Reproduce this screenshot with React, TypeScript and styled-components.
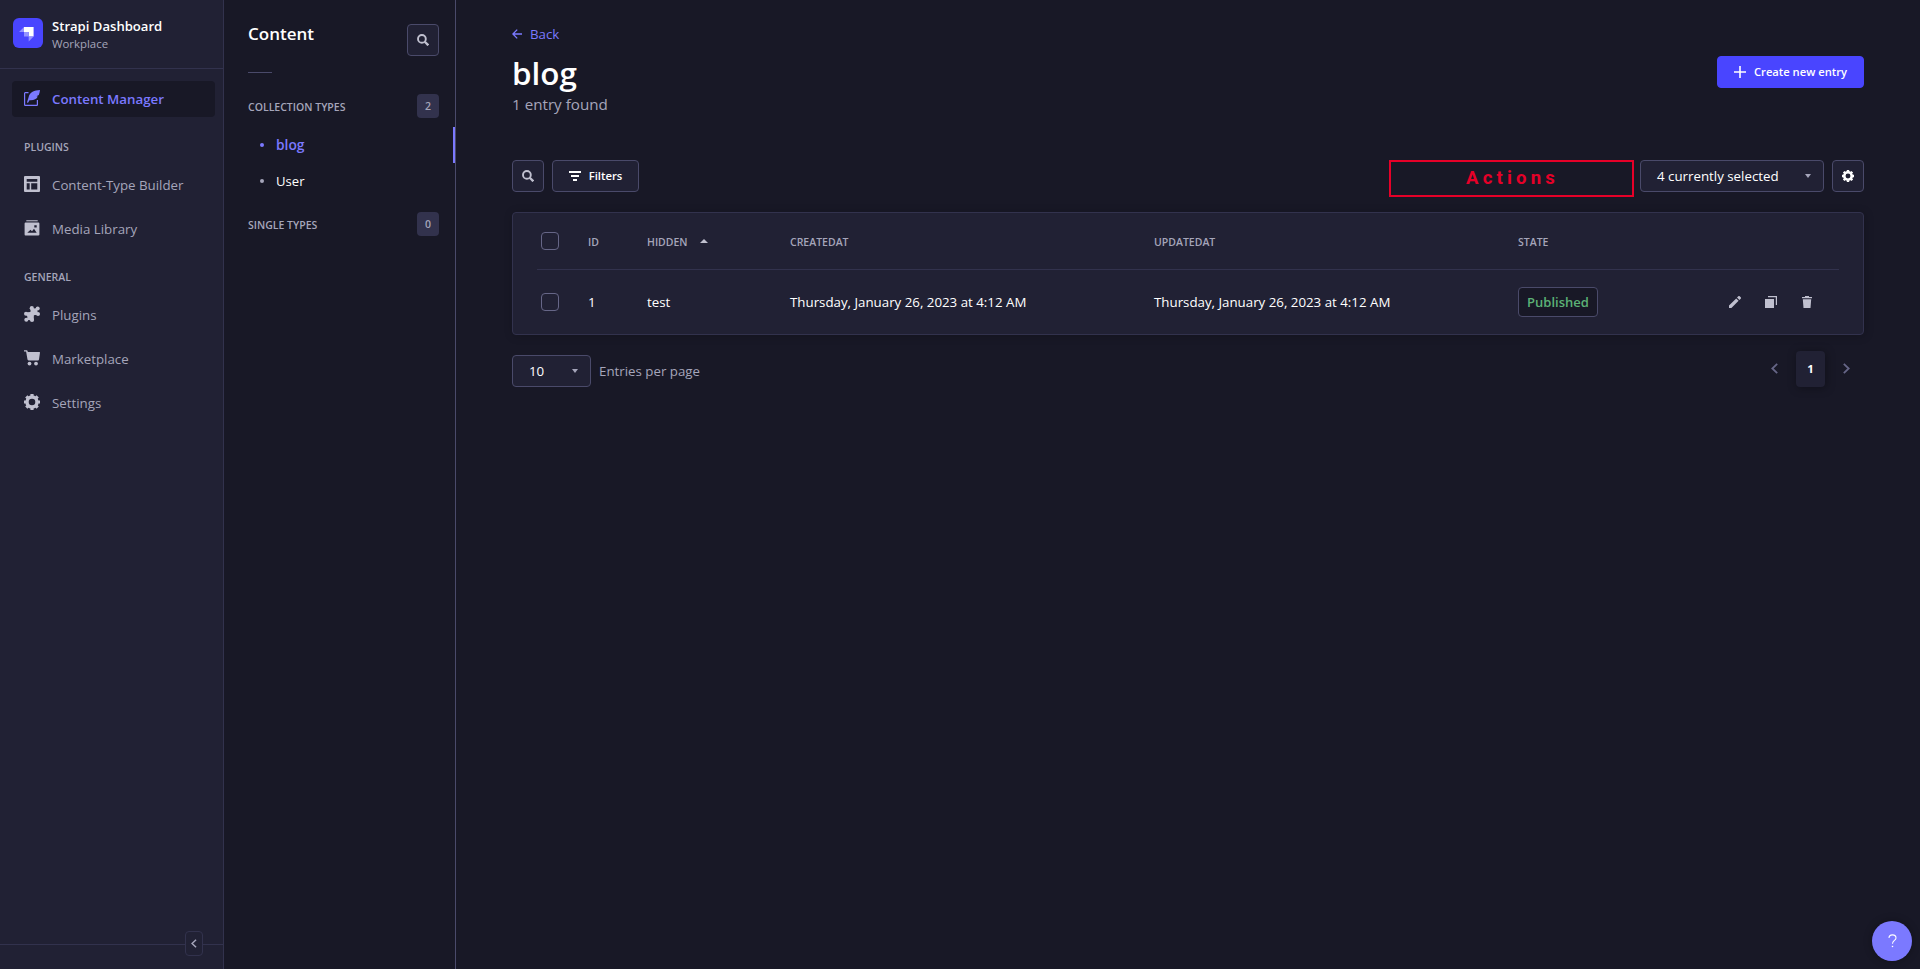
import React from 'react';
import styled, { createGlobalStyle, css } from 'styled-components';

const c = {
  panel: '#212134',
  page: '#181826',
  line: '#32324d',
  outline: '#4a4a6a',
  box: '#666687',
  muted: '#a5a5ba',
  icon: '#c0c0cf',
  white: '#ffffff',
  violet: '#7b79ff',
  blue: '#4945ff',
  green: '#5cb176',
  red: '#e60028',
};

const GlobalStyle = createGlobalStyle`
  * { box-sizing: border-box; }
  body {
    margin: 0;
    background: ${c.page};
    color: ${c.white};
    font-family: 'Open Sans', 'Noto Sans', sans-serif;
    font-size: 13.3px;
    line-height: 20px;
    white-space: nowrap;
  }
  svg { display: block; flex: none; }
  button { font: inherit; color: inherit; padding: 0; cursor: pointer; }
  h1, h2, p, ul { margin: 0; padding: 0; }
`;

const Layout = styled.div`
  display: grid;
  grid-template-columns: 224px 232px 1fr;
  height: 969px;
  overflow: hidden;
`;

/* main navigation */
const Sidebar = styled.nav`
  display: flex;
  flex-direction: column;
  background: ${c.panel};
  border-right: 1px solid ${c.line};
`;
const Brand = styled.div`
  display: flex;
  gap: 9px;
  height: 69px;
  padding: 18px 0 0 13px;
  border-bottom: 1px solid ${c.line};
`;
const BrandName = styled.div`
  font-size: 13.1px;
  font-weight: 600;
  line-height: 16px;
`;
const BrandSub = styled.div`
  font-size: 11.4px;
  line-height: 20px;
  color: ${c.muted};
`;
const NavList = styled.div`
  display: flex;
  flex-direction: column;
  flex: 1;
  padding: 12px 8px 0 12px;
`;
const NavItem = styled.a<{ $active?: boolean }>`
  display: flex;
  align-items: center;
  gap: 12px;
  height: 36px;
  margin-bottom: 8px;
  padding: 0 12px;
  border-radius: 4px;
  color: ${p => (p.$active ? c.violet : c.muted)};
  font-weight: ${p => (p.$active ? 600 : 400)};
  background: ${p => (p.$active ? c.page : 'transparent')};
  svg { color: ${p => (p.$active ? c.violet : c.icon)}; margin-bottom: 2px; }
`;
const NavLabel = styled.div`
  height: 20px;
  margin: 12px 0 10px 12px;
  font-size: 10.5px;
  font-weight: 600;
  color: ${c.muted};
`;
const SidebarFoot = styled.div`
  position: relative;
  height: 25px;
  border-top: 1px solid ${c.line};
`;
const Collapse = styled.button`
  position: absolute;
  right: 20px;
  top: -14px;
  display: grid;
  place-items: center;
  width: 18px;
  height: 25px;
  border: 1px solid ${c.line};
  border-radius: 4px;
  background: ${c.panel};
  color: ${c.muted};
`;

/* content types navigation */
const SubNav = styled.nav`
  border-right: 1px solid ${c.outline};
`;
const SubHead = styled.div`
  display: flex;
  justify-content: space-between;
  height: 72px;
  padding: 24px 16px 0 24px;
`;
const SubTitle = styled.h2`
  font-size: 17px;
  font-weight: 600;
  line-height: 20px;
`;
const Rule = styled.div`
  width: 24px;
  height: 1px;
  margin: 0 0 21px 24px;
  background: ${c.outline};
`;
const GroupHead = styled.div`
  display: flex;
  align-items: center;
  justify-content: space-between;
  height: 24px;
  margin-bottom: 9px;
  padding: 0 16px 0 24px;
  font-size: 10.5px;
  font-weight: 600;
  line-height: 22px;
  color: ${c.muted};
`;
const GroupName = styled.span`
  padding-top: 2px;
`;
const Count = styled.span`
  display: grid;
  place-items: center;
  width: 22px;
  height: 24px;
  border-radius: 4px;
  background: ${c.line};
`;
const TypeList = styled.ul`
  list-style: none;
  margin-bottom: 13px;
`;
const TypeItem = styled.li<{ $active?: boolean }>`
  display: flex;
  align-items: center;
  gap: 12px;
  height: 36px;
  padding-left: 36px;
  color: ${p => (p.$active ? c.violet : c.white)};
  font-size: ${p => (p.$active ? 13.8 : 13.1)}px;
  font-weight: ${p => (p.$active ? 600 : 400)};
  border-right: 2px solid ${p => (p.$active ? c.violet : 'transparent')};
  &::before {
    content: '';
    width: 4px;
    height: 4px;
    border-radius: 50%;
    background: ${p => (p.$active ? c.violet : c.muted)};
  }
`;

/* main area */
const Main = styled.main`
  padding: 24px 56px 0;
`;
const Back = styled.a`
  display: flex;
  align-items: center;
  gap: 8px;
  height: 20px;
  color: ${c.violet};
`;
const Header = styled.header`
  display: flex;
  justify-content: space-between;
  height: 116px;
  padding-top: 9px;
`;
const Title = styled.h1`
  font-size: 31.4px;
  font-weight: 600;
  line-height: 40px;
`;
const Subtitle = styled.p`
  font-size: 15.2px;
  line-height: 22px;
  color: ${c.muted};
`;
const buttonBase = css`
  display: flex;
  align-items: center;
  justify-content: center;
  height: 32px;
  border: 1px solid ${c.outline};
  border-radius: 4px;
  background: ${c.panel};
`;
const IconButton = styled.button<{ $color?: string }>`
  ${buttonBase}
  width: 32px;
  color: ${p => p.$color || c.icon};
`;
const FilterButton = styled.button`
  ${buttonBase}
  gap: 8px;
  width: 87px;
  font-size: 11.3px;
  font-weight: 600;
`;
const CreateButton = styled.button`
  ${buttonBase}
  gap: 8px;
  width: 147px;
  margin-top: 3px;
  border-color: ${c.blue};
  background: ${c.blue};
  font-size: 11.2px;
  font-weight: 600;
`;
const Toolbar = styled.div`
  display: flex;
  gap: 8px;
  height: 52px;
`;
const ActionsBox = styled.div`
  display: grid;
  place-items: center;
  width: 245px;
  height: 37px;
  margin: 0 -2px 0 auto;
  padding: 0 0 2px 2px;
  border: 2px solid ${c.red};
  color: ${c.red};
  font: 700 18.5px/24px Roboto, sans-serif;
  letter-spacing: 4.2px;
`;
const Select = styled.div<{ $width: number }>`
  ${buttonBase}
  justify-content: space-between;
  width: ${p => p.$width}px;
  padding: 0 12px 0 16px;
  svg { color: ${c.muted}; }
`;

const Card = styled.section`
  padding: 0 24px;
  border: 1px solid ${c.line};
  border-radius: 4px;
  background: ${c.panel};
  box-shadow: 1px 1px 10px rgba(3, 3, 5, 0.2);
`;
const Row = styled.div`
  display: grid;
  grid-template-columns: 51px 59px 143px 364px 364px 1fr 110px;
  align-items: center;
  height: 64px;
`;
const HeadRow = styled(Row)`
  height: 57px;
  border-bottom: 1px solid ${c.line};
  font-size: 10.5px;
  font-weight: 600;
  line-height: 22px;
  color: ${c.muted};
`;
const HeadCell = styled.span`
  display: flex;
  align-items: center;
  gap: 12px;
  padding-top: 2px;
  svg { margin-bottom: 2px; }
`;
const Checkbox = styled.span`
  width: 18px;
  height: 18px;
  margin-left: 4px;
  border: 1px solid ${c.box};
  border-radius: 4px;
`;
const Status = styled.span`
  display: grid;
  place-items: center;
  width: 80px;
  height: 30px;
  border: 1px solid ${c.outline};
  border-radius: 4px;
  background: ${c.page};
  color: ${c.green};
  font-size: 13px;
  font-weight: 600;
`;
const RowActions = styled.span`
  display: flex;
  gap: 24px;
  color: ${c.icon};
`;

const Footer = styled.footer`
  display: flex;
  justify-content: space-between;
  padding-top: 16px;
`;
const PageSize = styled.div`
  display: flex;
  align-items: center;
  gap: 8px;
  padding-top: 4px;
  color: ${c.muted};
`;
const SizeValue = styled.span`
  color: ${c.white};
`;
const Pager = styled.div`
  display: flex;
  align-items: center;
  height: 36px;
  gap: 18px;
  padding-right: 14px;
  color: ${c.box};
  svg { margin-bottom: 1px; }
`;
const Page = styled.span`
  display: grid;
  place-items: center;
  width: 29px;
  height: 36px;
  border-radius: 4px;
  background: ${c.panel};
  color: ${c.white};
  font-size: 11.4px;
  font-weight: 700;
  box-shadow: 1px 1px 10px rgba(3, 3, 5, 0.35);
`;
const Help = styled.button`
  position: fixed;
  right: 8px;
  bottom: 8px;
  display: grid;
  place-items: center;
  width: 40px;
  height: 40px;
  border: 0;
  border-radius: 50%;
  background: ${c.violet};
  box-shadow: 0 0 8px rgba(0, 0, 0, 0.3);
`;

/* icons */
const Logo = () => (
  <svg width="30" height="30" viewBox="0 0 30 30">
    <rect width="30" height="30" rx="6" fill="#4945ff" />
    <path d="M11 9h9.600v9.600h-4.900v-4.700H11z" fill="#fff" />
    <path d="M11 9v4.900H6z M15.700 18.600h4.900l-4.900 4.900z M11 13.900h4.700v4.700H11z" fill="#9593ff" />
  </svg>
);
const Feather = () => (
  <svg width="16" height="16" viewBox="0 0 16 16" fill="currentColor">
    <path d="M16 0C10.500 .2 5.500 2.200 4.600 7.200L3 12.300l.9.600 1.600-2.700c3.800.4 7-.9 8.300-3.700l-1.300-.3 2.300-1.200C15.500 3.500 15.800 1.800 16 0z" />
    <path d="M4.500 2.700H1.200a.6.600 0 0 0-.6.600v11.500c0 .3.300.6.600.6h11.600c.3 0 .6-.3.600-.6V10" fill="none" stroke="currentColor" strokeWidth="1.200" />
  </svg>
);
const Builder = () => (
  <svg width="16" height="16" viewBox="0 0 16 16" fill="currentColor" fillRule="evenodd">
    <path d="M1 0h14a1 1 0 0 1 1 1v14a1 1 0 0 1-1 1H1a1 1 0 0 1-1-1V1a1 1 0 0 1 1-1zM2.700 3v2.800h10.600V3zM2.700 7.300v6.200h3V7.300zM7.200 7.300v6.200h6.100V7.300z" />
  </svg>
);
const Media = () => (
  <svg width="16" height="16" viewBox="0 0 16 16" fill="currentColor" fillRule="evenodd">
    <path d="M2.300 0h11.400v1.400H2.300z" opacity=".75" />
    <path d="M1.500 2.500h13c.5 0 .9.400.9.900v11.200c0 .5-.4.900-.9.900h-13a.9.900 0 0 1-.9-.9V3.400c0-.5.400-.9.900-.9zM3.300 12.700h9.400L10 8.700l-2 2.500-1.500-1.500zM10.300 5.200v2.400h2.400V5.200z" />
  </svg>
);
const Puzzle = () => (
  <svg width="16" height="16" viewBox="0 0 16 16" fill="currentColor">
    <path d="M6.600 3.400L8.600 2.600 13 2.200l.7 4.400-.6 2.200-3.200.4-.2 4.200-1.600.9-5.100-.3.400-3.200L2 8.500l1.200-2.300 3.200-.1z" />
    <circle cx="7.800" cy="2.200" r="2.100" />
    <circle cx="13.700" cy="2.400" r="2" />
    <circle cx="14" cy="8" r="2" />
    <circle cx="8" cy="13.900" r="2.100" />
    <circle cx="2.300" cy="13.700" r="2" />
    <circle cx="2" cy="7.800" r="2" />
  </svg>
);
const Cart = () => (
  <svg width="16" height="16" viewBox="0 0 16 16" fill="currentColor">
    <path d="M0 .2h2.700c.4 0 .7.200.8.6L3.800 2H15.500c.3 0 .5.300.5.6L15 9.500c-.1.500-.5.900-1 .9H4.500c-.5 0-.9-.3-1-.8L2.100 1.600H0z" />
    <circle cx="5.500" cy="13.600" r="1.900" />
    <circle cx="12" cy="13.600" r="1.900" />
  </svg>
);
const Cog = ({ size = 16 }: { size?: number }) => (
  <svg width={size} height={size} viewBox="0 0 16 16" fill="none" stroke="currentColor">
    <circle cx="8" cy="8" r="5" strokeWidth="3.400" />
    <path d="M8 0v2.500M8 13.500V16M0 8h2.500M13.500 8H16M2.300 2.300l1.800 1.800M11.900 11.900l1.800 1.800M13.700 2.300l-1.800 1.800M4.100 11.900l-1.800 1.800" strokeWidth="3.200" />
  </svg>
);
const Search = () => (
  <svg width="12" height="12" viewBox="0 0 12 12" fill="none" stroke="currentColor">
    <circle cx="4.900" cy="4.900" r="3.900" strokeWidth="1.900" />
    <path d="M7.800 7.800l3.500 3.500" strokeWidth="2.300" />
  </svg>
);
const Chevron = ({ flip, size = 11 }: { flip?: boolean; size?: number }) => (
  <svg width={(size * 7) / 11} height={size} viewBox="0 0 7 11" fill="none" stroke="currentColor" strokeWidth="1.800">
    <path d={flip ? 'M.8.8l4.900 4.700L.8 10.200' : 'M6.200.8L1.300 5.500l4.900 4.700'} />
  </svg>
);
const Caret = ({ up }: { up?: boolean }) => (
  <svg width={up ? 8 : 6} height="4" viewBox="0 0 8 4" preserveAspectRatio="none" fill={up ? c.icon : 'currentColor'}>
    <path d={up ? 'M0 4L4 0l4 4z' : 'M0 0h8L4 4z'} />
  </svg>
);
const ArrowLeft = () => (
  <svg width="10" height="10" viewBox="0 0 10 10" fill="none" stroke="currentColor" strokeWidth="1.300">
    <path d="M10 5H1M5.200.6L.9 5l4.300 4.400" />
  </svg>
);
const FilterIcon = () => (
  <svg width="12" height="10" viewBox="0 0 12 10" fill="currentColor">
    <path d="M0 0h12v2H0zM2 4h8v2H2zM4 8h4v2H4z" />
  </svg>
);
const Plus = () => (
  <svg width="12" height="12" viewBox="0 0 12 12" fill="currentColor">
    <path d="M5.200 0h1.600v5.200H12v1.600H6.800V12H5.200V6.800H0V5.200h5.200z" />
  </svg>
);
const Pencil = () => (
  <svg width="12" height="12" viewBox="0 0 12 12" fill="currentColor">
    <path d="M0 9.600L7.200 2.400l2.400 2.400L2.400 12H0zM8 1.600L9.300.3a1 1 0 0 1 1.400 0l1 1a1 1 0 0 1 0 1.400L10.400 4z" />
  </svg>
);
const Duplicate = () => (
  <svg width="12" height="12" viewBox="0 0 12 12" fill="currentColor">
    <path d="M0 3h9v9H0zM3 0h9v9h-1.200V1.200H3z" />
  </svg>
);
const Trash = () => (
  <svg width="12" height="12" viewBox="0 0 12 12" fill="currentColor">
    <path d="M1 1h3V0h4v1h3v1.200H1zM1.800 3.200h8.400L9.500 12h-7z" />
  </svg>
);

const rowDate = 'Thursday, January 26, 2023 at 4:12 AM';

export default function App() {
  return (
    <>
      <GlobalStyle />
      <Layout>
        <Sidebar>
          <Brand>
            <Logo />
            <div>
              <BrandName>Strapi Dashboard</BrandName>
              <BrandSub>Workplace</BrandSub>
            </div>
          </Brand>
          <NavList>
            <NavItem $active><Feather /><span>Content Manager</span></NavItem>
            <NavLabel>PLUGINS</NavLabel>
            <NavItem><Builder /><span>Content-Type Builder</span></NavItem>
            <NavItem><Media /><span>Media Library</span></NavItem>
            <NavLabel>GENERAL</NavLabel>
            <NavItem><Puzzle /><span>Plugins</span></NavItem>
            <NavItem><Cart /><span>Marketplace</span></NavItem>
            <NavItem><Cog /><span>Settings</span></NavItem>
          </NavList>
          <SidebarFoot>
            <Collapse aria-label="Collapse"><Chevron size={9} /></Collapse>
          </SidebarFoot>
        </Sidebar>

        <SubNav>
          <SubHead>
            <SubTitle>Content</SubTitle>
            <IconButton aria-label="Search"><Search /></IconButton>
          </SubHead>
          <Rule />
          <GroupHead><GroupName>COLLECTION TYPES</GroupName><Count>2</Count></GroupHead>
          <TypeList>
            <TypeItem $active>blog</TypeItem>
            <TypeItem>User</TypeItem>
          </TypeList>
          <GroupHead><GroupName>SINGLE TYPES</GroupName><Count>0</Count></GroupHead>
        </SubNav>

        <Main>
          <Back><ArrowLeft /><span>Back</span></Back>
          <Header>
            <div>
              <Title>blog</Title>
              <Subtitle>1 entry found</Subtitle>
            </div>
            <CreateButton><Plus /><span>Create new entry</span></CreateButton>
          </Header>
          <Toolbar>
            <IconButton aria-label="Search"><Search /></IconButton>
            <FilterButton><FilterIcon /><span>Filters</span></FilterButton>
            <ActionsBox>Actions</ActionsBox>
            <Select $width={184}><span>4 currently selected</span><Caret /></Select>
            <IconButton $color={c.white} aria-label="Settings"><Cog size={12} /></IconButton>
          </Toolbar>
          <Card>
            <HeadRow>
              <Checkbox />
              <HeadCell>ID</HeadCell>
              <HeadCell><span>HIDDEN</span><Caret up /></HeadCell>
              <HeadCell>CREATEDAT</HeadCell>
              <HeadCell>UPDATEDAT</HeadCell>
              <HeadCell>STATE</HeadCell>
            </HeadRow>
            <Row>
              <Checkbox />
              <span>1</span>
              <span>test</span>
              <span>{rowDate}</span>
              <span>{rowDate}</span>
              <Status>Published</Status>
              <RowActions><Pencil /><Duplicate /><Trash /></RowActions>
            </Row>
          </Card>
          <Footer>
            <PageSize>
              <Select $width={79}><SizeValue>10</SizeValue><Caret /></Select>
              <span>Entries per page</span>
            </PageSize>
            <Pager><Chevron /><Page>1</Page><Chevron flip /></Pager>
          </Footer>
        </Main>
      </Layout>
      <Help aria-label="Help">
        <svg width="9" height="14" viewBox="0 0 10 16" fill="none" stroke="#fff" strokeWidth="1.200">
          <path d="M1 4.600C1 2.300 2.600 1 5 1s4 1.400 4 3.500c0 2.600-4 3.300-4 6.500" />
          <path d="M5 13.500V15" strokeWidth="1.600" />
        </svg>
      </Help>
    </>
  );
}
